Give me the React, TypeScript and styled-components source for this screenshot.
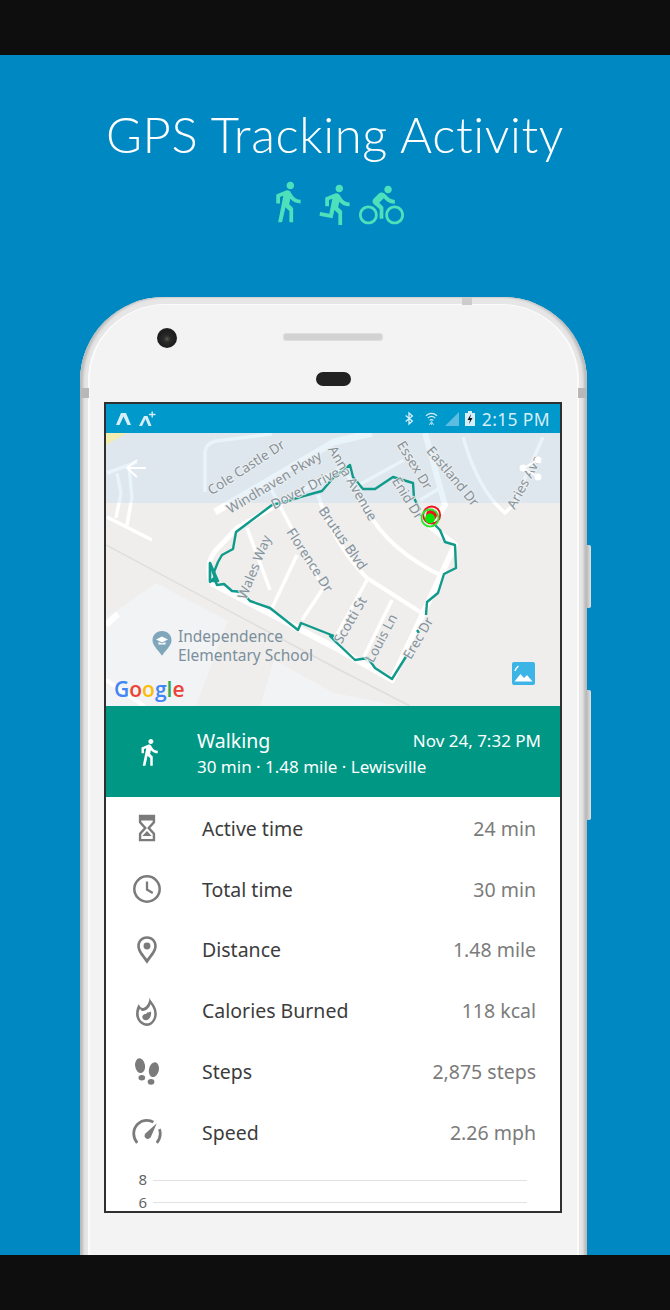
import React from "react";
import styled, { createGlobalStyle } from "styled-components";

const Global = createGlobalStyle`
  html, body { margin: 0; padding: 0; background: #0e0e0e; }
  body { font-family: "Noto Sans", "Open Sans", sans-serif; }
`;

const Page = styled.div`
  width: 670px;
  height: 1310px;
  display: flex;
  flex-direction: column;
  overflow: hidden;
`;
const BlackBar = styled.div`
  height: 55px;
  flex: none;
  background: #0e0e0e;
`;
const Stage = styled.main`
  height: 1200px;
  flex: none;
  background: #0088c2;
  overflow: hidden;
  display: flex;
  flex-direction: column;
  align-items: center;
`;
const Title = styled.h1`
  margin: 46px 0 0;
  font-family: Lato, sans-serif;
  font-weight: 300;
  font-size: 49px;
  line-height: 66px;
  letter-spacing: 0.6px;
  color: #fff;
  white-space: nowrap;
`;
const ActivityIcons = styled.div`
  display: flex;
  align-items: flex-start;
  margin-top: 12px;
  height: 49px;
  padding-right: 1px;
`;
const ActivityIcon = styled.svg<{ $top: number; $left: number }>`
  width: 45px;
  height: 45px;
  fill: #4ee0bb;
  margin-top: ${(p) => p.$top}px;
  margin-left: ${(p) => p.$left}px;
`;
const Phone = styled.div`
  position: relative;
  flex: none;
  align-self: flex-start;
  width: 507px;
  margin: 69px 0 0 80px;
  padding: 8px 10px 0 10px;
  box-sizing: border-box;
  border-radius: 84px 84px 0 0;
  background: #e6e6e6;
  box-shadow: inset 4px 0 3px -1px #b9b9b9, inset -4px 0 3px -1px #b9b9b9, inset 0 1px 1px #dadada;
`;
const Band = styled.i<{ $side: "left" | "right" }>`
  position: absolute;
  top: 91px;
  ${(p) => p.$side}: 0;
  width: 9px;
  height: 10px;
  background: #b8b8b8;
`;
const TopBand = styled.i`
  position: absolute;
  top: 0;
  left: 382px;
  width: 10px;
  height: 8px;
  background: #cccccc;
`;
const SideKey = styled.i<{ $top: number; $h: number }>`
  position: absolute;
  left: 100%;
  top: ${(p) => p.$top}px;
  width: 4px;
  height: ${(p) => p.$h}px;
  background: linear-gradient(90deg, #bdbdbd, #e2e2e2);
  border-radius: 0 2px 2px 0;
`;
const Body = styled.div`
  background: #f3f3f3;
  border-radius: 75px 75px 0 0;
  padding: 0 15px 100px 14px;
  box-shadow: 2px 0 0 #fbfbfb, -2px 0 0 #fbfbfb, 0 -1px 0 #fbfbfb;
`;
const Bezel = styled.div`
  position: relative;
  height: 97px;
  display: flex;
  flex-direction: column;
  align-items: center;
`;
const Camera = styled.div`
  position: absolute;
  left: 53px;
  top: 23px;
  width: 20px;
  height: 20px;
  border-radius: 50%;
  background: radial-gradient(circle at 50% 55%, #5a5a4a 0, #2a2a2a 22%, #1d1d1d 60%, #333 100%);
`;
const Speaker = styled.div`
  margin-top: 28px;
  width: 100px;
  height: 8px;
  border-radius: 4px;
  background: #d2d2d2;
  box-shadow: inset 0 0 0 1px #dedede;
`;
const Sensor = styled.div`
  margin-top: 31px;
  width: 35px;
  height: 14px;
  border-radius: 7px;
  background: #222;
`;
const Screen = styled.div`
  width: 458px;
  height: 811px;
  box-sizing: border-box;
  border: 2px solid #2f2f2f;
  background: #fff;
  overflow: hidden;
  display: flex;
  flex-direction: column;
`;
const StatusBar = styled.div`
  height: 29px;
  flex: none;
  background: #0099cc;
  display: flex;
  align-items: center;
  padding: 0 10px 0 10px;
  color: #d6eef7;
`;
const StatusGroup = styled.div`
  display: flex;
  align-items: center;
  gap: 6px;
`;
const StatusSpacer = styled.div`
  flex: 1;
`;
const StatusSvg = styled.svg<{ $after?: number }>`
  display: block;
  margin-right: ${(p) => p.$after ?? 0}px;
`;
const Clock = styled.span`
  font-size: 17.5px;
  line-height: 20px;
  margin-left: 1px;
  letter-spacing: 0.35px;
`;
const MapBox = styled.div`
  height: 273px;
  flex: none;
  background: #efeeec;
`;
const MapSvg = styled.svg`
  display: block;
  width: 454px;
  height: 273px;
`;
const Road = styled.path<{ $w: number }>`
  fill: none;
  stroke: #fff;
  stroke-width: ${(p) => p.$w}px;
  stroke-linejoin: round;
`;
const Rail = styled.path`
  fill: none;
  stroke: #dfdedc;
  stroke-width: 1.5px;
`;
const Route = styled.path`
  fill: none;
  stroke: #109a8b;
  stroke-width: 2.4px;
  stroke-linejoin: round;
`;
const StreetLabel = styled.text`
  font-family: "Noto Sans", sans-serif;
  font-size: 13.5px;
  fill: #85929b;
  stroke: rgba(239, 240, 240, 0.85);
  stroke-width: 2px;
  paint-order: stroke;
  text-anchor: middle;
  dominant-baseline: central;
`;
const SchoolLabel = styled.text`
  font-family: "Noto Sans", sans-serif;
  font-size: 15.5px;
  fill: #7b8f9c;
`;
const GoogleMark = styled.text`
  font-family: "Open Sans", sans-serif;
  font-size: 21px;
  font-weight: 600;
`;
const Summary = styled.div`
  height: 91px;
  flex: none;
  background: #009885;
  color: #fff;
  display: flex;
  align-items: center;
  padding: 0 19px 0 28px;
`;
const SummaryIcon = styled.svg`
  width: 30px;
  height: 30px;
  fill: #fff;
  flex: none;
  margin-right: 33px;
`;
const SummaryText = styled.div`
  flex: 1;
  display: flex;
  flex-direction: column;
  gap: 3px;
  margin-top: 4px;
`;
const SummaryHead = styled.div`
  display: flex;
  justify-content: space-between;
  align-items: center;
  height: 24px;
`;
const SummaryTitle = styled.span`
  font-size: 19.5px;
  line-height: 24px;
`;
const SummarySub = styled.span`
  font-size: 17px;
  line-height: 22px;
`;
const StatList = styled.div`
  display: flex;
  flex-direction: column;
  padding-top: 1px;
`;
const StatRow = styled.div`
  height: 60.8px;
  display: flex;
  align-items: center;
  padding: 0 24px 0 23px;
`;
const StatIcon = styled.svg`
  width: 36px;
  height: 30px;
  flex: none;
  margin-right: 37px;
  fill: #7b7b7b;
`;
const StatLabel = styled.span`
  flex: 1;
  font-size: 19.5px;
  color: #3c3c3c;
`;
const StatValue = styled.span`
  font-size: 19.5px;
  color: #7b7b7b;
`;
const Chart = styled.div`
  padding: 5px 33px 0 29px;
  display: flex;
  flex-direction: column;
`;
const ChartRow = styled.div`
  height: 22.5px;
  display: flex;
  align-items: center;
  gap: 6px;
`;
const ChartTick = styled.span`
  width: 12px;
  font-size: 15px;
  color: #666;
  text-align: right;
`;
const ChartLine = styled.div`
  flex: 1;
  height: 1px;
  margin-top: 2px;
  background: #e2e2e2;
`;

const WALK = "M13.5 5.5c1.1 0 2-.9 2-2s-.9-2-2-2-2 .9-2 2 .9 2 2 2zM9.8 8.9L7 23h2.1l1.8-8 2.1 2v6h2v-7.5l-2.1-2 .6-3C14.8 12 16.8 13 19 13v-2c-1.9 0-3.5-1-4.3-2.4l-1-1.6c-.4-.6-1-1-1.7-1-.3 0-.5.1-.8.1L6 8.3V13h2V9.6l1.8-.7";
const RUN = "M13.49 5.48c1.1 0 2-.9 2-2s-.9-2-2-2-2 .9-2 2 .9 2 2 2zm-3.6 13.9l1-4.4 2.1 2v6h2v-7.5l-2.1-2 .6-3c1.3 1.5 3.3 2.5 5.5 2.5v-2c-1.9 0-3.5-1-4.3-2.4l-1-1.6c-.4-.6-1-1-1.7-1-.3 0-.5.1-.8.1l-5.2 2.2v4.7h2v-3.4l1.8-.7-1.6 8.1-4.9-1-.4 2 7 1.4z";
const BIKE = "M15.5 5.5c1.1 0 2-.9 2-2s-.9-2-2-2-2 .9-2 2 .9 2 2 2zM5 12c-2.8 0-5 2.2-5 5s2.2 5 5 5 5-2.2 5-5-2.2-5-5-5zm0 8.5c-1.9 0-3.5-1.6-3.5-3.5s1.6-3.5 3.5-3.5 3.5 1.6 3.5 3.5-1.6 3.5-3.5 3.5zm5.8-10l2.4-2.4.8.8c1.3 1.3 3 2.1 5.1 2.1V9c-1.5 0-2.7-.6-3.6-1.5l-1.9-1.9c-.5-.4-1-.6-1.6-.6s-1.1.2-1.4.6L7.8 8.4c-.4.4-.6.9-.6 1.4 0 .6.2 1.1.6 1.4L11 14v5h2v-6.2l-2.2-2.3zM19 12c-2.8 0-5 2.2-5 5s2.2 5 5 5 5-2.2 5-5-2.2-5-5-5zm0 8.5c-1.9 0-3.5-1.6-3.5-3.5s1.6-3.5 3.5-3.5 3.5 1.6 3.5 3.5-1.6 3.5-3.5 3.5z";

const labels: [string, number, number, number][] = [
  ["Cole Castle Dr", 246, 467, -33],
  ["Windhaven Pkwy", 274, 482, -31],
  ["Dover Drive", 305, 488, -27],
  ["Anna Avenue", 353, 483, 60],
  ["Essex Dr", 415, 465, 58],
  ["Eastland Dr", 453, 476, 50],
  ["Enid Dr", 408, 498, 58],
  ["Aries Ave", 524, 482, -62],
  ["Brutus Blvd", 343, 538, 55],
  ["Wales Way", 254, 567, -68],
  ["Florence Dr", 310, 560, 57],
  ["Scotti St", 350, 620, -60],
  ["Louis Ln", 381, 638, -62],
  ["Erec Dr", 418, 638, -60],
];

const MapDrawing = () => (
  <MapSvg viewBox="106 433 454 273">
    <path d="M106 618L156 583L228 621L196 706H106Z" fill="#f2f3f4" />
    <path d="M260 706L274 660L334 693L400 706Z" fill="#f2f3f4" />
    <Rail d="M106 545L334 667L410 706" />
    <Road $w={6} d="M211 583L334 647L392 680L455 545L431 527L445 505L425 433" />
    <Road $w={5} d="M211 583C207 570 208 556 220 546L237 528L277 505L334 473L345 466" />
    <Road $w={7} d="M215 512L334 442L372 433" />
    <Road $w={3.5} d="M205 492V453Q205 444 216 441L272 434" />
    <Road $w={3.5} d="M247 528L270 590" />
    <Road $w={3.5} d="M270 487L324 590" />
    <Road $w={3.5} d="M272 608L297 555" />
    <Road $w={3.5} d="M302 620L322 590" />
    <Road $w={4} d="M318 495Q334 545 367 578L425 615" />
    <Road $w={4} d="M334 450L367 510Q388 550 444 577" />
    <Road $w={3.5} d="M367 580L334 640" />
    <Road $w={3.5} d="M392 600L364 657" />
    <Road $w={3.5} d="M357 486L404 460" />
    <Road $w={3.5} d="M440 488L420 500" />
    <Road $w={3.5} d="M463 437Q478 490 505 513L513 505L543 437" />
    <Road $w={3.5} d="M107 473L137 462M117 473L121 493L116 518M129 467L132 497L127 525M107 517L152 540" />
    <Road $w={6} d="M106 625L118 614" />
    <Road $w={4} d="M106 680L144 706" />
    <path d="M106 433H560V503H106Z" fill="#b7dbef" fillOpacity="0.32" />
    <path d="M106 433H127L106 445Z" fill="#f2ecb0" />
    <path d="M127 468H146M137 460L127 468L137 477" fill="none" stroke="#fff" strokeWidth="2" />
    <Route d="M334 636L301 623L298 630L270 608L250 601L242 592L232 591L224 584L217 585L214 578L210 582L210 563L215 578L214 572L218 562L222 555L233 549L236 532L272 505L288 501L300 497L322 491L334 477L350 465L353 477L363 489L375 489L393 477L413 483L414 498L420 510" />
    <Route d="M210 563L218 581L210 581Z" fill="#109a8b" />
    <Route d="M430 520L440 530L445 542L455 545L456 568L444 574L438 593L427 602L426 615" />
    <Route d="M417 630L419 633M407 655L392 679L375 668L368 658L355 660L337 643L330 636L334 636" />
    {labels.map(([t, x, y, a]) => (
      <StreetLabel key={t} x={x} y={y} transform={`rotate(${a} ${x} ${y})`}>
        {t}
      </StreetLabel>
    ))}
    <path d="M538 460L523 468L538 477" fill="none" stroke="#fff" strokeWidth="1.5" />
    <circle cx="538" cy="460" r="3.500" fill="#fff" />
    <circle cx="523" cy="468" r="3.500" fill="#fff" />
    <circle cx="538" cy="477" r="3.500" fill="#fff" />
    <circle cx="431.700" cy="515" r="8.500" fill="none" stroke="#f0141c" strokeWidth="1.800" />
    <circle cx="431.500" cy="515" r="5.500" fill="#f0141c" />
    <circle cx="430" cy="518" r="8.500" fill="none" stroke="#2be82b" strokeWidth="1.800" />
    <circle cx="430" cy="518.500" r="5" fill="#08e808" />
    <path d="M162 631c-5.500 0-9.500 4-9.500 9.300 0 5.500 6 10 9.500 15.500 3.500-5.500 9.500-10 9.500-15.500 0-5.300-4-9.300-9.500-9.300z" fill="#7fa6ba" />
    <path d="M156 639.500l6-3 6 3-6 3zM158.500 642v2.500h7V642l-3.500 1.500z" fill="#fff" />
    <SchoolLabel x="178" y="642">Independence</SchoolLabel>
    <SchoolLabel x="178" y="661">Elementary School</SchoolLabel>
    <GoogleMark x="114" y="697">
      <tspan fill="#4285f4">G</tspan>
      <tspan fill="#ea4335">o</tspan>
      <tspan fill="#fbbc05">o</tspan>
      <tspan fill="#4285f4">g</tspan>
      <tspan fill="#34a853">l</tspan>
      <tspan fill="#ea4335">e</tspan>
    </GoogleMark>
    <rect x="512" y="662" width="23" height="23" rx="2" fill="#3cb4e6" />
    <path d="M514.500 681.500l6-7.500 3.500 4 3-3 5.500 6.500z" fill="#fff" />
    <path d="M515 671q1-3 3.500-5" fill="none" stroke="#fff" strokeWidth="1.500" />
  </MapSvg>
);

const stats: [string, string, React.ReactNode][] = [
  [
    "Active time",
    "24 min",
    <>
      <path d="M6 1.500h12v5.500L13.500 12l4.500 5v5.500H6V17l4.500-5L6 7z" fill="none" stroke="#7b7b7b" strokeWidth="2.100" />
      <path d="M6.500 2h11v3.500h-11zM12 14.500l4 4.500H8z" />
    </>,
  ],
  [
    "Total time",
    "30 min",
    <>
      <circle cx="12" cy="12" r="11" fill="none" stroke="#7b7b7b" strokeWidth="2.200" />
      <path d="M12 5.500V12.500L17 15.500" fill="none" stroke="#7b7b7b" strokeWidth="2" />
    </>,
  ],
  [
    "Distance",
    "1.48 mile",
    <path d="M12 0C6.800 0 3.500 4 3.500 8.500 3.500 14 9 19 12 24c3-5 8.500-10 8.500-15.500C20.500 4 17.200 0 12 0zm0 19.500C9.500 16 5.800 12.500 5.800 8.500 5.800 5 8.500 2.300 12 2.300s6.200 2.700 6.200 6.200c0 4-3.700 7.500-6.200 11zM12 5.500a3 3 0 100 6 3 3 0 000-6z" />,
  ],
  [
    "Calories Burned",
    "118 kcal",
    <>
      <path d="M14 0c1 4 6.500 7 6.500 14.500C20.500 20 16.500 25 12 25S2.500 20.500 2.500 14.500C2.500 10.500 4 7.500 5 6c.5 2.500 2 3.500 3.500 3.500C11 9 14.500 5 14 0zM6 9.800C5 11.500 4.800 13 4.800 14.500 4.800 19 8 22.700 12 22.700s6.300-4 6.300-8.200c0-4-2-6.700-3.200-8.500-.8 3.200-3.800 6-6.600 6-1 0-2-.5-2.500-2.200z" />
      <path d="M15.500 12.500c.5 4-1.500 7.500-4.500 7.500-2 0-3.500-1.500-3-3.500.3-1.500 2-2 3-2 1-.5 1-1 1-1.500 1 .5 2.500 0 3.500-.5z" />
    </>,
  ],
  [
    "Steps",
    "2,875 steps",
    <>
      <ellipse cx="6" cy="6.500" rx="4.300" ry="6.500" transform="rotate(-8 6 6.500)" />
      <ellipse cx="7.500" cy="17" rx="2.900" ry="2.400" />
      <ellipse cx="18" cy="10" rx="4.300" ry="6.500" transform="rotate(12 18 10)" />
      <ellipse cx="15.500" cy="20.500" rx="2.900" ry="2.500" />
    </>,
  ],
  [
    "Speed",
    "2.26 mph",
    <>
      <path d="M3.500 21.500C1.500 19 .5 16.500.5 13.500.5 7 5.500 2 12 2c2 0 4 .5 5.500 1.500" fill="none" stroke="#7b7b7b" strokeWidth="2.400" />
      <path d="M20.500 21.500c2-2.500 3-5 3-8 0-1.500-.3-3-.8-4" fill="none" stroke="#7b7b7b" strokeWidth="2.400" />
      <path d="M20.500 4.500l-5 11.500c-.8 1.800-2.800 2.500-4.300 1.700-1.500-.9-1.800-3-.6-4.300z" />
    </>,
  ],
];

export default function App() {
  return (
    <Page>
      <Global />
      <BlackBar />
      <Stage>
        <Title>GPS Tracking Activity</Title>
        <ActivityIcons>
          <ActivityIcon viewBox="0 0 24 24" $top={0} $left={0}><path d={WALK} /></ActivityIcon>
          <ActivityIcon viewBox="0 0 24 24" $top={3} $left={3.5}><path d={RUN} /></ActivityIcon>
          <ActivityIcon viewBox="0 0 24 24" $top={4} $left={0.5}><path d={BIKE} /></ActivityIcon>
        </ActivityIcons>
        <Phone>
          <TopBand />
          <Band $side="left" />
          <Band $side="right" />
          <SideKey $top={248} $h={63} />
          <SideKey $top={393} $h={130} />
          <Body>
            <Bezel>
              <Camera />
              <Speaker />
              <Sensor />
            </Bezel>
            <Screen>
              <StatusBar>
                <StatusGroup>
                  <StatusSvg width="15" height="13" viewBox="0 0 15 13" $after={2}>
                    <path d="M0 13L5 1H10L15 13H11.500L7.500 4.500 3.500 13Z" fill="#d6eef7" />
                  </StatusSvg>
                  <StatusSvg width="17" height="15" viewBox="0 0 17 15">
                    <path d="M0 15L5 5H8.500L12.500 15H9.500L6.500 8L3 15Z" fill="#d6eef7" />
                    <path d="M10 3.500H16.500M13.200 .5V6.500" stroke="#d6eef7" strokeWidth="1.400" />
                  </StatusSvg>
                </StatusGroup>
                <StatusSpacer />
                <StatusGroup>
                  <StatusSvg width="10" height="15" viewBox="0 0 12 15" $after={5}>
                    <path d="M2 4l8 6.500L6 14V1l4 3.500L2 11" fill="none" stroke="#d6eef7" strokeWidth="1.600" />
                  </StatusSvg>
                  <StatusSvg width="13" height="15" viewBox="0 0 14 15" fill="none" stroke="#d6eef7" strokeWidth="1.200">
                    <path d="M1 4.500Q7-.5 13 4.500M3 7Q7 3.500 11 7M5 9.500Q7 8 9 9.500" />
                    <path d="M7 11v3.500M4.500 14.500L7 11l2.500 3.500" strokeOpacity="0.7" />
                  </StatusSvg>
                  <StatusSvg width="15" height="15" viewBox="0 0 15 15">
                    <path d="M15 1V15H1Z" fill="#5cbde0" />
                  </StatusSvg>
                  <StatusSvg width="10" height="15" viewBox="0 0 10 15">
                    <path d="M0 2H3V0H7V2H10V15H0Z" fill="#d6eef7" />
                    <path d="M6 3L2.500 9H5L4 13L7.500 7H5Z" fill="#111" />
                  </StatusSvg>
                  <Clock>2:15 PM</Clock>
                </StatusGroup>
              </StatusBar>
              <MapBox>
                <MapDrawing />
              </MapBox>
              <Summary>
                <SummaryIcon viewBox="0 0 24 24"><path d={WALK} /></SummaryIcon>
                <SummaryText>
                  <SummaryHead>
                    <SummaryTitle>Walking</SummaryTitle>
                    <SummarySub>Nov 24, 7:32 PM</SummarySub>
                  </SummaryHead>
                  <SummarySub>30 min · 1.48 mile · Lewisville</SummarySub>
                </SummaryText>
              </Summary>
              <StatList>
                {stats.map(([label, value, icon]) => (
                  <StatRow key={label}>
                    <StatIcon viewBox="-2 -1 28 26">{icon}</StatIcon>
                    <StatLabel>{label}</StatLabel>
                    <StatValue>{value}</StatValue>
                  </StatRow>
                ))}
              </StatList>
              <Chart>
                <ChartRow><ChartTick>8</ChartTick><ChartLine /></ChartRow>
                <ChartRow><ChartTick>6</ChartTick><ChartLine /></ChartRow>
              </Chart>
            </Screen>
          </Body>
        </Phone>
      </Stage>
      <BlackBar />
    </Page>
  );
}
